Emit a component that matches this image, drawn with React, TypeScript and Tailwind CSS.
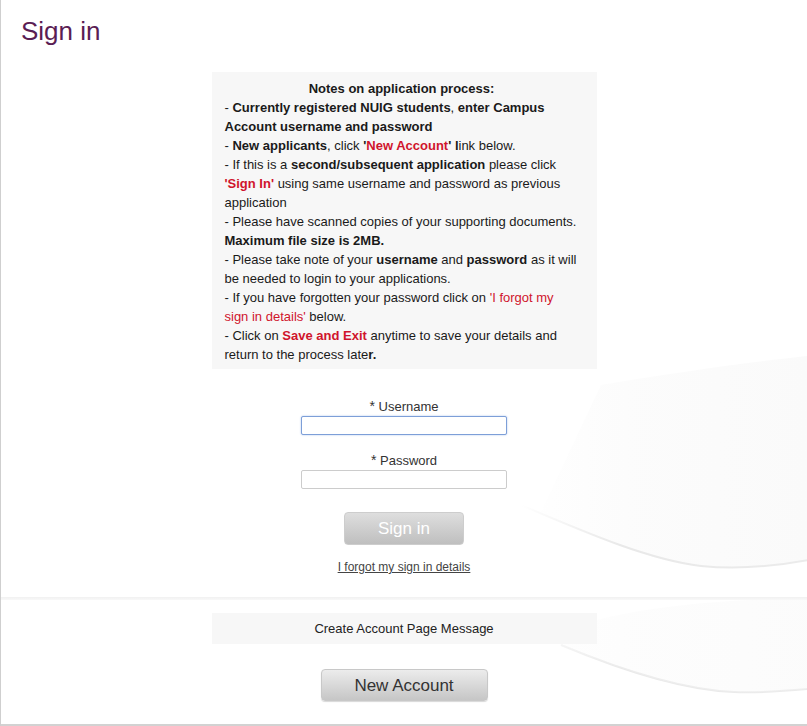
export default function App() {
    return <div className="relative w-full h-[726px] bg-white border-l border-[#cfcfcf] overflow-hidden font-['Liberation_Sans',Arial,sans-serif] text-[#222]">
        {/* faint background waves */}
        <svg className="absolute inset-0 pointer-events-none" width="807" height="726" viewBox="0 0 807 726">
            <defs>
                <linearGradient id="fade" x1="520" y1="0" x2="807" y2="0" gradientUnits="userSpaceOnUse">
                    <stop offset="0" stopColor="#f5f5f5" stopOpacity="0" />
                    <stop offset="0.4" stopColor="#f7f7f7" stopOpacity="0.8" />
                    <stop offset="1" stopColor="#f5f5f5" stopOpacity="1" />
                </linearGradient>
                <linearGradient id="line" x1="520" y1="0" x2="807" y2="0" gradientUnits="userSpaceOnUse">
                    <stop offset="0" stopColor="#e6e6e6" stopOpacity="0" />
                    <stop offset="0.35" stopColor="#e9e9e9" stopOpacity="1" />
                    <stop offset="1" stopColor="#ebebeb" stopOpacity="1" />
                </linearGradient>
            </defs>
            <path d="M600 385 C680 372 750 362 807 356 L807 560 C770 566 735 569 700 566 C650 561 600 540 540 512 Z" fill="url(#fade)" opacity="0.5" />
            <path d="M520 505 C590 535 650 560 700 566 C740 570 775 566 807 560" fill="none" stroke="url(#line)" strokeWidth="2" />
            <path d="M560 645 C620 670 680 690 733 692 C760 693 785 691 807 689" fill="none" stroke="url(#line)" strokeWidth="2" />
            <path d="M540 640 C600 610 700 600 807 598 L807 689 C785 691 760 693 733 692 C680 690 620 670 560 645 Z" fill="url(#fade)" opacity="0.35" />
        </svg>

        <div className="relative flex flex-col h-full">
            {/* top panel */}
            <div className="h-[597px] flex flex-col">
                <h1 className="pl-[20px] pt-[16px] text-[26px] leading-[30px] text-[#5b1d54]">Sign in</h1>

                <div className="mt-[26px] mx-auto w-[385px] bg-[#f7f7f7] pl-[13px] pr-[18px] pt-[7px] pb-[5px] text-[13px] leading-[19px] text-[#1a1a1a]">
                    <p className="text-center font-bold">Notes on application process:</p>
                    <p>- <b>Currently registered NUIG students</b>, <b>enter Campus Account username and password</b></p>
                    <p>- <b>New applicants</b>, click <b>'<span className="text-[#d0142c]">New Account</span>' l</b>ink below.</p>
                    <p>- If this is a <b>second/subsequent application</b> please click <b className="text-[#d0142c]">'Sign In'</b> using same username and password as previous application</p>
                    <p>- Please have scanned copies of your supporting documents. <b>Maximum file size is 2MB.</b></p>
                    <p>- Please take note of your <b>username</b> and <b>password</b> as it will be needed to login to your applications.</p>
                    <p>- If you have forgotten your password click on <span className="text-[#d0142c]">'I forgot my sign in details'</span> below.</p>
                    <p>- Click on <b className="text-[#d0142c]">Save and Exit</b> anytime to save your details and return to the process late<b>r.</b></p>
                </div>

                <div className="flex flex-col items-center">
                    <label className="mt-[28px] text-[13px] leading-[19px] text-[#333]"><span className="text-[14px]">*</span> Username</label>
                    <input type="text" className="w-[206px] h-[19px] bg-white border border-[#7d9fd8] rounded-[2px] shadow-[0_0_2px_#a9c1ea] outline-none" />
                    <label className="mt-[16px] text-[13px] leading-[19px] text-[#333]"><span className="text-[14px]">*</span> Password</label>
                    <input type="password" className="w-[206px] h-[19px] bg-white border border-[#cccccc] rounded-[2px] outline-none" />
                    <button className="mt-[23px] w-[120px] h-[33px] rounded-[4px] border border-[#cdcdcd] bg-gradient-to-b from-[#dedede] to-[#bfbfbf] text-white text-[17px] leading-none">Sign in</button>
                    <a href="#" className="mt-[14px] text-[12px] leading-[16px] text-[#444] underline">I forgot my sign in details</a>
                </div>
            </div>

            {/* separator */}
            <div className="h-[3px] bg-gradient-to-b from-[#f1f1f1] to-[#f8f8f8]" />

            {/* bottom panel */}
            <div className="flex-1 flex flex-col items-center">
                <div className="mt-[13px] w-[385px] h-[31px] bg-[#f7f7f7] flex items-center justify-center text-[13px] text-[#222]">Create Account Page Message</div>
                <button className="mt-[25px] w-[167px] h-[32px] rounded-[4px] border border-[#c8c8c8] bg-gradient-to-b from-[#ececec] to-[#c6c6c6] shadow-[0_1px_1px_#d8d8d8] text-[#333] text-[17px] leading-none">New Account</button>
            </div>

            <div className="h-[2px] bg-[#d2d2d2]" />
        </div>
    </div>
}
